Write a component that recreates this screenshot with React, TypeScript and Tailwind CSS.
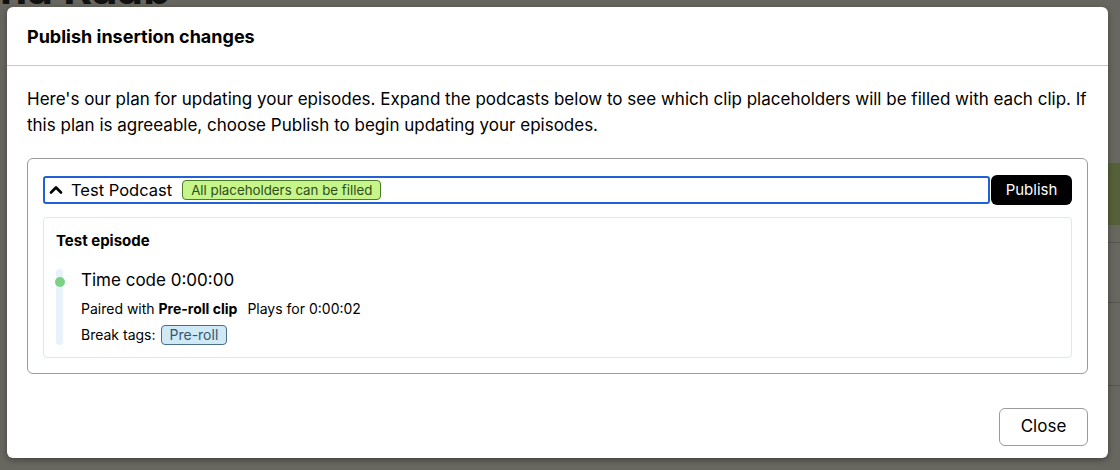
import { ChevronUp } from "lucide-react";

const FONT = { fontFamily: 'Inter, "Liberation Sans", Arial, sans-serif' };

function Backdrop() {
  // the page behind the dialog, dimmed by the overlay
  return (
    <div className="absolute inset-0 bg-[#67665f]">
      <div className="absolute left-0 top-0 h-[7px] w-[220px] overflow-hidden">
        <div className="mt-[-34px] whitespace-nowrap text-[44px] font-bold leading-[44px] text-[#111]">na Raab</div>
      </div>
      <div className="absolute right-0 top-[163px] h-[62px] w-[12px] bg-[#556039]" />
      <div className="absolute right-0 top-[242px] h-px w-[12px] bg-[#55544f]" />
      <div className="absolute right-0 top-[302px] h-px w-[12px] bg-[#55544f]" />
      <div className="absolute right-0 top-[385px] h-px w-[12px] bg-[#55544f]" />
    </div>
  );
}

function EpisodeCard() {
  return (
    <div className="mx-[15px] mt-[12px] rounded-[4px] border border-[#d4eaf7] px-[12px] pb-[12px] pt-[13px]">
      <div className="text-[15px] font-bold leading-[20px] text-black">Test episode</div>
      <div className="mt-[18px] flex">
        <div className="relative w-[7px] rounded-full bg-[#e9f1fb]">
          <div className="absolute left-[-1px] top-[8px] h-[10px] w-[10px] rounded-full bg-[#7bd285]" />
        </div>
        <div className="ml-[18px] flex flex-col">
          <div className="text-[17px] leading-[22px] text-black">Time code 0:00:00</div>
          <div className="mt-[9px] text-[14px] leading-[18px] text-black">
            Paired with <span className="font-bold">Pre-roll clip</span>
            <span className="ml-[10px]">Plays for 0:00:02</span>
          </div>
          <div className="mt-[7px] flex items-center text-[14px] leading-[20px] text-black">
            Break tags:
            <span className="ml-[5px] rounded-[4px] border border-[#4d6f84] bg-[#cfe9f7] px-[8px] text-[14px] leading-[18px] text-[#36566a]">
              Pre-roll
            </span>
          </div>
        </div>
      </div>
    </div>
  );
}

export default function App() {
  return (
    <div className="relative h-[470px] w-[1120px] overflow-hidden" style={FONT}>
      <Backdrop />
      <div className="absolute left-[7px] top-[7px] flex h-[451px] w-[1101px] flex-col rounded-[6px] bg-white shadow-[0_2px_6px_rgba(0,0,0,0.35)]">
        {/* Header */}
        <div className="flex h-[59px] items-center border-b border-[#c8c8c8] px-[20px]">
          <h2 className="text-[18px] font-bold text-black">Publish insertion changes</h2>
        </div>

        {/* Body */}
        <div className="flex-1 px-[20px] pt-[20px]">
          <p className="text-[17px] leading-[26px] text-black">
            Here's our plan for updating your episodes. Expand the podcasts below to see which clip placeholders will be
            filled with each clip. If this plan is agreeable, choose Publish to begin updating your episodes.
          </p>

          <div className="mt-[20px] h-[216px] rounded-[6px] border border-[#9b9b9b] pt-[16px]">
            <div className="flex items-center px-[15px]">
              <button className="flex h-[28px] flex-1 items-center rounded-[3px] border-2 border-[#2160d6] pl-[1px] text-left">
                <ChevronUp className="h-[20px] w-[20px] text-black" strokeWidth={3.2} />
                <span className="ml-[5px] text-[16.5px] text-black">Test Podcast</span>
                <span className="ml-[10px] rounded-[4px] border border-[#4c7a2c] bg-[#c6f58a] px-[8px] text-[13.3px] leading-[18px] text-[#2f4d1c]">
                  All placeholders can be filled
                </span>
              </button>
              <button className="ml-[1px] h-[30px] w-[81px] rounded-[6px] bg-black text-[15px] text-white">Publish</button>
            </div>
            <EpisodeCard />
          </div>
        </div>

        {/* Footer */}
        <div className="flex justify-end px-[20px] pb-[12px]">
          <button className="h-[38px] w-[89px] rounded-[6px] border border-[#9b9b9b] bg-white text-[17px] text-black">
            Close
          </button>
        </div>
      </div>
    </div>
  );
}
